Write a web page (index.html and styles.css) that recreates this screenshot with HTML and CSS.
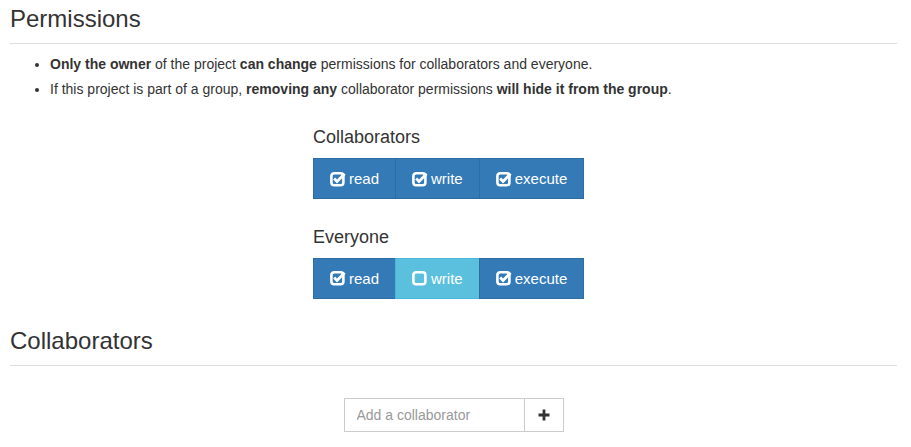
FILE: index.html
```html
<!DOCTYPE html>
<html>
<head>
<meta charset="utf-8">
<link rel="stylesheet" href="styles.css">
</head>
<body>
<div class="container">
  <section class="section">
    <h3 class="page-header">Permissions</h3>
    <ul class="notes">
      <li><b>Only the owner</b> of the project <b>can change</b> permissions for collaborators and everyone.</li>
      <li>If this project is part of a group, <b>removing any</b> collaborator permissions <b>will hide it from the group</b>.</li>
    </ul>
    <div class="perms">
      <h4 class="perm-title">Collaborators</h4>
      <div class="btn-group">
        <button class="btn btn-primary"><svg class="ico" viewBox="0 0 16 16"><rect x="1.4" y="2.2" width="12" height="12" rx="2.8" fill="none" stroke="#fff" stroke-width="2.6"/><path d="M4.2 7.6 L7 10.4 L14.6 2.8" fill="none" stroke="#fff" stroke-width="2.8"/></svg>read</button>
        <button class="btn btn-primary"><svg class="ico" viewBox="0 0 16 16"><rect x="1.4" y="2.2" width="12" height="12" rx="2.8" fill="none" stroke="#fff" stroke-width="2.6"/><path d="M4.2 7.6 L7 10.4 L14.6 2.8" fill="none" stroke="#fff" stroke-width="2.8"/></svg>write</button>
        <button class="btn btn-primary"><svg class="ico" viewBox="0 0 16 16"><rect x="1.4" y="2.2" width="12" height="12" rx="2.8" fill="none" stroke="#fff" stroke-width="2.6"/><path d="M4.2 7.6 L7 10.4 L14.6 2.8" fill="none" stroke="#fff" stroke-width="2.8"/></svg>execute</button>
      </div>
      <h4 class="perm-title second">Everyone</h4>
      <div class="btn-group">
        <button class="btn btn-primary"><svg class="ico" viewBox="0 0 16 16"><rect x="1.4" y="2.2" width="12" height="12" rx="2.8" fill="none" stroke="#fff" stroke-width="2.6"/><path d="M4.2 7.6 L7 10.4 L14.6 2.8" fill="none" stroke="#fff" stroke-width="2.8"/></svg>read</button>
        <button class="btn btn-info"><svg class="ico" viewBox="0 0 16 16"><rect x="1.4" y="2.2" width="12" height="12" rx="2.8" fill="none" stroke="#fff" stroke-width="2.6"/></svg>write</button>
        <button class="btn btn-primary"><svg class="ico" viewBox="0 0 16 16"><rect x="1.4" y="2.2" width="12" height="12" rx="2.8" fill="none" stroke="#fff" stroke-width="2.6"/><path d="M4.2 7.6 L7 10.4 L14.6 2.8" fill="none" stroke="#fff" stroke-width="2.8"/></svg>execute</button>
      </div>
    </div>
  </section>
  <section class="section">
    <h3 class="page-header">Collaborators</h3>
    <div class="add-row">
      <div class="input-group">
        <input class="form-control" type="text" placeholder="Add a collaborator">
        <button class="btn-add"><svg viewBox="0 0 12 12" width="12" height="12"><path d="M6 0.5 V11.5 M0.5 6 H11.5" stroke="#333" stroke-width="2.8"/></svg></button>
      </div>
    </div>
  </section>
</div>
</body>
</html>
```
FILE: styles.css
```css
* { box-sizing: border-box; }
body {
  margin: 0;
  font-family: "Liberation Sans", Arial, sans-serif;
  font-size: 14px;
  line-height: 1.42857;
  color: #333;
  background: #fff;
}
.container {
  padding: 0 14px 0 10px;
}
.page-header {
  margin: 6px 0 0;
  padding-bottom: 11px;
  border-bottom: 1px solid #ddd;
  font-size: 24px;
  font-weight: 500;
  line-height: 1.1;
  color: #333;
}
.notes {
  margin: 11px 0 0;
  padding-left: 40px;
  font-size: 14px;
}
.notes li {
  margin-bottom: 5px;
}
.perms {
  width: 281px;
  margin: 28px auto 0;
}
.perm-title {
  margin: 0 0 10px;
  font-size: 18px;
  font-weight: 500;
  line-height: 1.1;
}
.perm-title.second { margin-top: 29px; }
.btn-group {
  display: flex;
}
.btn {
  display: inline-flex;
  align-items: center;
  height: 41px;
  padding: 0 16px;
  border: 1px solid;
  font-family: inherit;
  font-size: 15px;
  color: #fff;
  cursor: pointer;
}
.btn + .btn { margin-left: -1px; }
.btn-primary { background: #337ab7; border-color: #2e6da4; }
.btn-info { background: #5bc0de; border-color: #46b8da; }
.ico {
  width: 16px;
  height: 16px;
  margin-right: 3px;
  flex: none;
}
.section + .section { margin-top: 29px; }
.add-row {
  display: flex;
  justify-content: center;
  margin-top: 32px;
}
.input-group {
  display: flex;
  height: 34px;
}
.form-control {
  width: 181px;
  height: 34px;
  padding: 6px 12px;
  border: 1px solid #ccc;
  font-family: inherit;
  font-size: 14px;
  color: #555;
  outline: none;
}
.form-control::placeholder { color: #999; }
.btn-add {
  width: 40px;
  height: 34px;
  margin-left: -1px;
  border: 1px solid #ccc;
  background: #fff;
  display: flex;
  align-items: center;
  justify-content: center;
  padding: 0;
}
```
